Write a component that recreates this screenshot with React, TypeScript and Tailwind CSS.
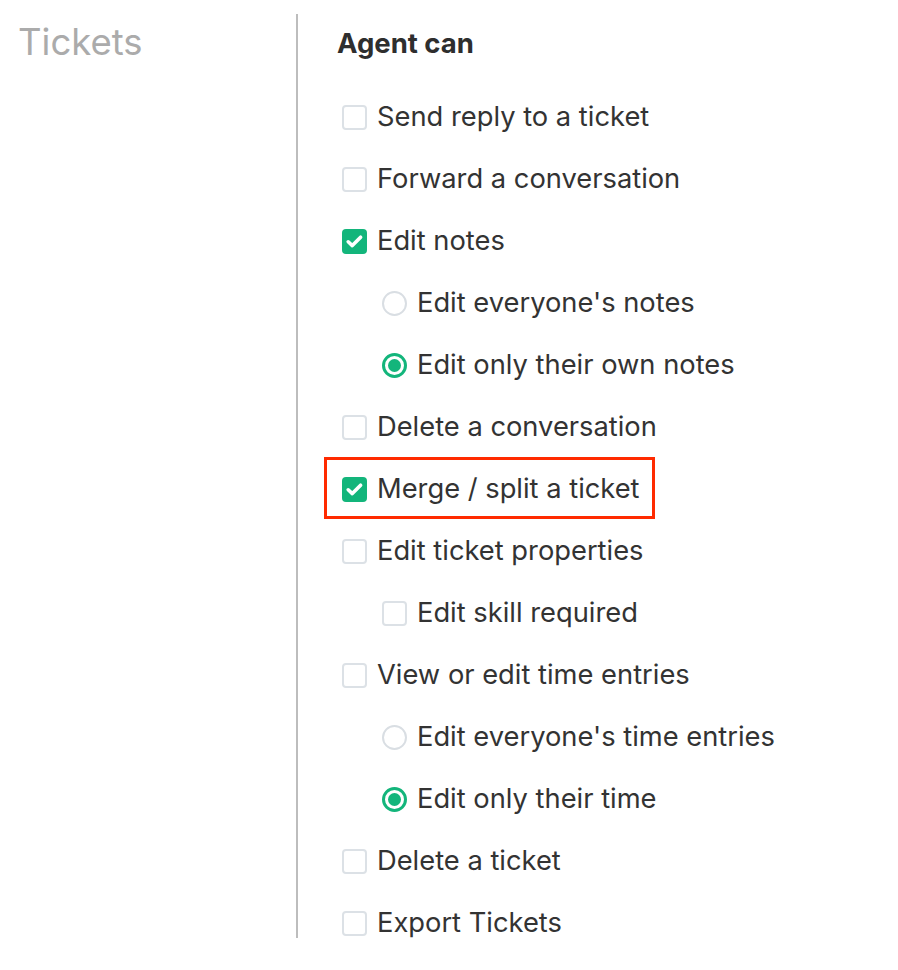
import React from "react";

type Item = {
  label: string;
  kind: "check" | "radio";
  checked?: boolean;
  level: 0 | 1;
  highlight?: boolean;
};

const items: Item[] = [
  { label: "Send reply to a ticket", kind: "check", level: 0 },
  { label: "Forward a conversation", kind: "check", level: 0 },
  { label: "Edit notes", kind: "check", checked: true, level: 0 },
  { label: "Edit everyone's notes", kind: "radio", level: 1 },
  { label: "Edit only their own notes", kind: "radio", checked: true, level: 1 },
  { label: "Delete a conversation", kind: "check", level: 0 },
  { label: "Merge / split a ticket", kind: "check", checked: true, level: 0, highlight: true },
  { label: "Edit ticket properties", kind: "check", level: 0 },
  { label: "Edit skill required", kind: "check", level: 1 },
  { label: "View or edit time entries", kind: "check", level: 0 },
  { label: "Edit everyone's time entries", kind: "radio", level: 1 },
  { label: "Edit only their time", kind: "radio", checked: true, level: 1 },
  { label: "Delete a ticket", kind: "check", level: 0 },
  { label: "Export Tickets", kind: "check", level: 0 },
];

function Box({ kind, checked }: { kind: "check" | "radio"; checked?: boolean }) {
  if (kind === "radio") {
    return checked ? (
      <span className="flex h-[25px] w-[25px] shrink-0 items-center justify-center rounded-full border-[3px] border-[#13b57b] bg-white">
        <span className="h-[13px] w-[13px] rounded-full bg-[#13b57b]" />
      </span>
    ) : (
      <span className="h-[25px] w-[25px] shrink-0 rounded-full border-2 border-[#d9dee3] bg-white" />
    );
  }
  return checked ? (
    <span className="flex h-[25px] w-[25px] shrink-0 items-center justify-center rounded-[4px] bg-[#13b57b]">
      <svg width="21" height="21" viewBox="0 0 21 21" fill="none">
        <path d="M4.2 10.8 L8.3 14.6 L16.6 6.2" stroke="white" strokeWidth="3.6" strokeLinecap="round" strokeLinejoin="round" />
      </svg>
    </span>
  ) : (
    <span className="h-[25px] w-[25px] shrink-0 rounded-[4px] border-2 border-[#dce1e6] bg-white" />
  );
}

export default function App() {
  return (
    <div className="flex min-h-[970px] w-full bg-white font-['Inter',sans-serif] text-[#333333]">
      <div className="w-[296px] shrink-0 pl-[18px] pt-[19px]">
        <div className="text-[36.5px] leading-[46px] text-[#ababab]">Tickets</div>
      </div>
      <div className="mt-[14px] h-[924px] w-[2px] shrink-0 bg-[#bdbdbd]" />
      <div className="flex flex-col pl-[39px] pt-[25px]">
        <div className="h-[36px] text-[27.5px] font-bold leading-[36px] text-[#2e2e2e]">Agent can</div>
        <div className="mt-[25px] flex flex-col">
          {items.map((it, i) => (
            <div
              key={i}
              className={`relative flex h-[62px] w-fit items-center gap-[10px] ${it.level === 1 ? "pl-[45px]" : "pl-[5px]"}`}
            >
              {it.highlight && (
                <span className="pointer-events-none absolute left-[-13px] right-[-15px] top-[-1px] bottom-[1px] border-[3px] border-[#ff2a00]" />
              )}
              <Box kind={it.kind} checked={it.checked} />
              <span className="text-[27.3px] leading-[34px] text-[#333333]">{it.label}</span>
            </div>
          ))}
        </div>
      </div>
    </div>
  );
}
